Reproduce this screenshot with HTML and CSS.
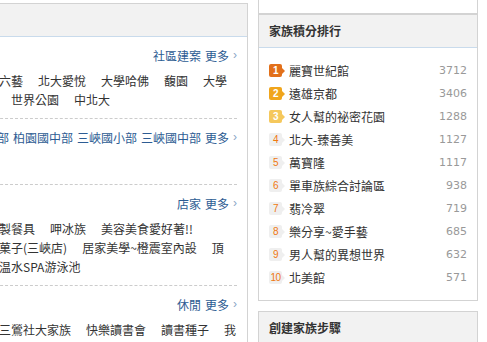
FILE: index.html
```html
<!DOCTYPE html>
<html lang="zh-TW">
<head>
    <meta charset="UTF-8">
    <meta name="viewport" content="width=device-width, initial-scale=1.0">
    <title>家族 - 社區</title>
    <link rel="stylesheet" href="styles.css">
</head>
<body>
    <div class="page">
        <div class="main-panel">
            <div class="panel-head"></div>
            <div class="main-body">
                <div class="group">
                    <div class="group-title">
                        <a href="#">社區建案</a>
                        <a href="#">更多</a>
                        <span class="group-arrow">›</span>
                    </div>
                    <div class="group-links">
                        <div class="line">
                            <a href="#">台北大學城御花園</a><a href="#">三峽富貴天下</a><a href="#">六藝</a><a href="#">北大愛悅</a><a href="#">大學哈佛</a><a href="#">馥園</a><a href="#">大學</a>
                        </div>
                        <div class="line">
                            <a href="#">北大特區國家一號院</a><a href="#">三峽麗寶之森</a><a href="#">世界公園</a><a href="#">中北大</a>
                        </div>
                    </div>
                </div>

                <div class="group">
                    <div class="group-title">
                        <a href="#">北大國小部</a>
                        <a href="#">柏園國中部</a>
                        <a href="#">三峽國小部</a>
                        <a href="#">三峽國中部</a>
                        <a href="#">更多</a>
                        <span class="group-arrow">›</span>
                    </div>
                    <div class="group-links group-links--empty"></div>
                </div>

                <div class="group">
                    <div class="group-title">
                        <a href="#">店家</a>
                        <a href="#">更多</a>
                        <span class="group-arrow">›</span>
                    </div>
                    <div class="group-links">
                        <div class="line">
                            <a href="#">三峽老街小吃</a><a href="#">北大早午餐店家</a><a href="#">木製餐具</a><a href="#">呷冰族</a><a href="#">美容美食愛好著!!</a>
                        </div>
                        <div class="line">
                            <a href="#">北大寵物美容</a><a href="#">三峽藍染手作坊</a><a href="#">和菓子(三峽店)</a><a href="#">居家美學~橙震室內設</a><a href="#">頂</a>
                        </div>
                        <div class="line">
                            <a href="#">三峽運動中心</a><a href="#">北大親子游泳教室</a><a href="#">温水SPA游泳池</a>
                        </div>
                    </div>
                </div>

                <div class="group">
                    <div class="group-title">
                        <a href="#">休閒</a>
                        <a href="#">更多</a>
                        <span class="group-arrow">›</span>
                    </div>
                    <div class="group-links">
                        <div class="line">
                            <a href="#">北大讀書俱樂部</a><a href="#">三峽親子共讀團</a><a href="#">三鶯社大家族</a><a href="#">快樂讀書會</a><a href="#">讀書種子</a><a href="#">我</a>
                        </div>
                    </div>
                </div>
            </div>
        </div>

        <div class="side">
            <div class="side-box side-box--tail"></div>

            <div class="side-box">
                <div class="side-head">家族積分排行</div>
                <ol class="rank-list">
                    <li><span class="rank rank--top1">1</span><a href="#" class="rank-name">麗寶世紀館</a><span class="rank-score">3712</span></li>
                    <li><span class="rank rank--top2">2</span><a href="#" class="rank-name">遠雄京都</a><span class="rank-score">3406</span></li>
                    <li><span class="rank rank--top3">3</span><a href="#" class="rank-name">女人幫的祕密花園</a><span class="rank-score">1288</span></li>
                    <li><span class="rank">4</span><a href="#" class="rank-name">北大-臻善美</a><span class="rank-score">1127</span></li>
                    <li><span class="rank">5</span><a href="#" class="rank-name">萬寶隆</a><span class="rank-score">1117</span></li>
                    <li><span class="rank">6</span><a href="#" class="rank-name">單車族綜合討論區</a><span class="rank-score">938</span></li>
                    <li><span class="rank">7</span><a href="#" class="rank-name">翡冷翠</a><span class="rank-score">719</span></li>
                    <li><span class="rank">8</span><a href="#" class="rank-name">樂分享~愛手藝</a><span class="rank-score">685</span></li>
                    <li><span class="rank">9</span><a href="#" class="rank-name">男人幫的異想世界</a><span class="rank-score">632</span></li>
                    <li><span class="rank">10</span><a href="#" class="rank-name">北美館</a><span class="rank-score">571</span></li>
                </ol>
            </div>

            <div class="side-box side-box--steps">
                <div class="side-head">創建家族步驟</div>
                <ol class="steps">
                    <li>登入會員</li>
                    <li>填寫家族資料</li>
                    <li>邀請鄰居加入</li>
                </ol>
            </div>
        </div>
    </div>
</body>
</html>
```

FILE: styles.css
```css
html, body {
    margin: 0;
    overflow: hidden;
    background: #fff;
}

body {
    font-family: "Noto Sans CJK TC", sans-serif;
    font-size: 12px;
    color: #333;
}

a {
    color: #333;
    text-decoration: none;
}

.page {
    display: flex;
    align-items: flex-start;
    gap: 10px;
    margin-left: -210px;
}

/* left column */
.main-panel {
    width: 458px;
    flex: none;
    margin-top: 3px;
    border: 1px solid #d3d3d3;
    box-sizing: border-box;
}

.panel-head {
    height: 32px;
    background: #f2f2f2;
    border-bottom: 1px solid #c9dbec;
}

.main-body {
    padding: 0 10px;
}

.group {
    padding: 9px 0;
    border-bottom: 1px dashed #cccccc;
}

.group-title {
    display: flex;
    justify-content: flex-end;
    gap: 4px;
    line-height: 19px;
    white-space: nowrap;
}

.group-title a {
    color: #2d5c93;
}

.group-arrow {
    font-family: "Liberation Sans", sans-serif;
    color: #8aa6c6;
}

.group-links {
    margin-top: 6px;
    line-height: 19px;
    overflow: hidden;
}

.group-links--empty {
    height: 22px;
}

.line {
    display: flex;
    gap: 15px;
    white-space: nowrap;
}

/* right column */
.side {
    width: 220px;
    flex: none;
}

.side-box {
    border: 1px solid #d3d3d3;
    box-sizing: border-box;
    background: #fff;
}

.side-box--tail {
    height: 14px;
    border-top: none;
}

.side-box--steps {
    margin-top: 10px;
}

.side-head {
    height: 32px;
    line-height: 32px;
    padding: 0 10px;
    background: #f2f2f2;
    border-bottom: 1px solid #c9dbec;
    font-weight: bold;
    color: #333;
}

.rank-list {
    list-style: none;
    margin: 0;
    padding: 11px 10px;
}

.rank-list li {
    display: flex;
    align-items: center;
    height: 23px;
}

.rank {
    position: relative;
    flex: none;
    width: 13px;
    height: 13px;
    margin-right: 7px;
    border-radius: 2px;
    background: #efefef;
    color: #f07810;
    font-family: "Liberation Sans", sans-serif;
    font-size: 10px;
    line-height: 13px;
    text-align: center;
    letter-spacing: -0.5px;
}

.rank::after {
    content: "";
    position: absolute;
    right: -3px;
    top: 4px;
    border-left: 3px solid #efefef;
    border-top: 3px solid transparent;
    border-bottom: 3px solid transparent;
}

.rank--top1,
.rank--top2,
.rank--top3 {
    color: #fff;
    font-weight: bold;
}

.rank--top1 {
    background: #e2701a;
}

.rank--top1::after {
    border-left-color: #e2701a;
}

.rank--top2 {
    background: #f0a51c;
}

.rank--top2::after {
    border-left-color: #f0a51c;
}

.rank--top3 {
    background: #f5c85c;
}

.rank--top3::after {
    border-left-color: #f5c85c;
}

.rank-name {
    flex: 1;
    white-space: nowrap;
    overflow: hidden;
}

.rank-score {
    font-family: "DejaVu Sans", sans-serif;
    font-size: 11px;
    color: #999;
}

.steps {
    margin: 0;
    padding: 10px 10px 10px 30px;
    line-height: 22px;
}
```
